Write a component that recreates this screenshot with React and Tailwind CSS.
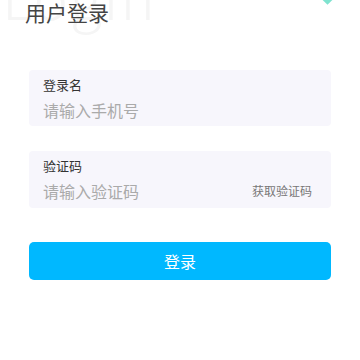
export default function App() {
  return (
    <div
      className="relative h-[360px] w-[360px] overflow-hidden bg-white"
      style={{ fontFamily: '"Noto Sans CJK SC", "Noto Sans", sans-serif' }}
    >
      <div className="absolute left-[2px] top-[-34px] select-none text-[58px] font-light leading-none tracking-[2px] text-[#f5f5f5]">
        Login
      </div>
      <div className="absolute right-[28px] top-[-6px] h-[9px] w-[9px] rotate-45 bg-[#7fe3cf]" />

      <div className="relative px-[29px]">
        <h1 className="-mt-[3px] -ml-[4px] text-[21px] leading-[30px] text-[#444]">用户登录</h1>

        <div className="mt-[43px] flex flex-col gap-[25px]">
          <div className="h-[56px] rounded-[4px] bg-[#f7f6fc] px-[14px] pt-[5px]">
            <div className="text-[13px] leading-[20px] text-[#333]">登录名</div>
            <div className="mt-[4px] text-[16px] leading-[22px] text-[#aaa]">请输入手机号</div>
          </div>
          <div className="h-[57px] rounded-[4px] bg-[#f7f6fc] px-[14px] pt-[5px]">
            <div className="text-[13px] leading-[20px] text-[#333]">验证码</div>
            <div className="mt-[4px] flex items-center justify-between">
              <span className="text-[16px] leading-[22px] text-[#aaa]">请输入验证码</span>
              <span className="pr-[5px] text-[12px] text-[#777]">获取验证码</span>
            </div>
          </div>
        </div>

        <button className="mt-[34px] flex h-[38px] w-full items-center justify-center rounded-[5px] bg-[#00b8ff] text-[16px] text-white">
          登录
        </button>
      </div>
    </div>
  );
}
